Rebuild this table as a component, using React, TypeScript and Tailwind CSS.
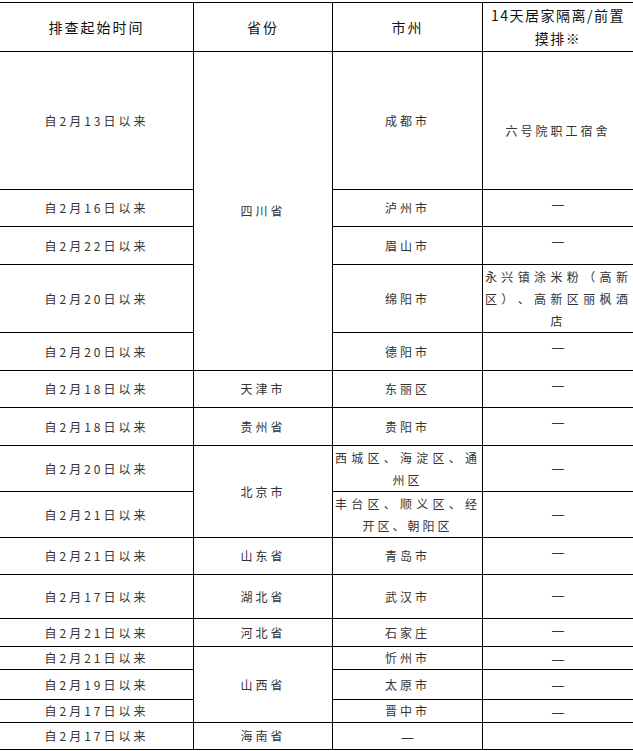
import React from "react";

type Row = {
  date: string;
  province?: string;
  provinceSpan?: string;
  city: string;
  cityWrap?: boolean;
  note?: string;
  noteClass?: string;
  noteWrap?: boolean;
};

const rows: Row[] = [
  { date: "自2月13日以来", province: "四川省", provinceSpan: "row-span-5", city: "成都市", note: "六号院职工宿舍", noteClass: "pt-[20px]" },
  { date: "自2月16日以来", city: "泸州市", note: "—", noteClass: "pb-[10px]" },
  { date: "自2月22日以来", city: "眉山市", note: "—", noteClass: "pb-[10px]" },
  { date: "自2月20日以来", city: "绵阳市", note: "永兴镇涂米粉（高新区）、高新区丽枫酒店", noteWrap: true },
  { date: "自2月20日以来", city: "德阳市", note: "—", noteClass: "pb-[10px]" },
  { date: "自2月18日以来", province: "天津市", city: "东丽区", note: "—", noteClass: "pb-[10px]" },
  { date: "自2月18日以来", province: "贵州省", city: "贵阳市", note: "—", noteClass: "pb-[10px]" },
  { date: "自2月20日以来", province: "北京市", provinceSpan: "row-span-2", city: "西城区、海淀区、通州区", cityWrap: true, note: "—", noteClass: "pb-[3px]" },
  { date: "自2月21日以来", city: "丰台区、顺义区、经开区、朝阳区", cityWrap: true, note: "—", noteClass: "pb-[3px]" },
  { date: "自2月21日以来", province: "山东省", city: "青岛市", note: "—", noteClass: "pb-[10px]" },
  { date: "自2月17日以来", province: "湖北省", city: "武汉市", note: "—", noteClass: "pb-[4px]" },
  { date: "自2月21日以来", province: "河北省", city: "石家庄", note: "—", noteClass: "pb-[6px]" },
  { date: "自2月21日以来", province: "山西省", provinceSpan: "row-span-3", city: "忻州市", note: "—" },
  { date: "自2月19日以来", city: "太原市", note: "—" },
  { date: "自2月17日以来", city: "晋中市", note: "—" },
  { date: "自2月17日以来", province: "海南省", city: "—", note: "" },
];

const cell = "flex items-center justify-center text-center border-b border-r border-black px-[2px]";
const body = "text-[12px] tracking-[3px] text-[#333]";

function Text({ value, wrap }: { value: string; wrap?: boolean }) {
  if (value === "—") {
    return <span className="text-[15px] leading-none tracking-normal text-[#333]">—</span>;
  }

  if (wrap) {
    return (
      <div className="w-full text-justify leading-[22px] [text-align-last:center]">
        {value}
      </div>
    );
  }

  return <span>{value}</span>;
}

export default function App() {
  return (
    <main
      className="min-h-screen bg-white [text-spacing-trim:space-all]"
      style={{ fontFamily: '"Noto Sans CJK SC", "Liberation Sans", sans-serif' }}
    >
      <div className="mt-[2px] grid w-[633px] grid-cols-[194px_139px_150px_150px] grid-rows-[49px_138px_37px_38px_68px_38px_37px_38px_46px_46px_37px_44px_28px_23px_30px_23px_27px] border-t border-black">
        <div className={`${cell} text-[14px] tracking-[2px] text-[#111]`}>排查起始时间</div>
        <div className={`${cell} text-[14px] tracking-[2px] text-[#111]`}>省份</div>
        <div className={`${cell} text-[14px] tracking-[2px] text-[#111]`}>市州</div>
        <div className={`${cell} border-r-0 text-[14px] leading-[23px] tracking-[1.5px] text-[#111]`}>
          14天居家隔离/前置摸排※
        </div>

        {rows.map((row, index) => (
          <React.Fragment key={index}>
            <div className={`${cell} ${body}`}>{row.date}</div>
            {row.province && (
              <div className={`${cell} ${body} ${row.provinceSpan ?? ""}`}>{row.province}</div>
            )}
            <div className={`${cell} ${body} ${row.cityWrap ? "leading-[21px]" : ""}`}>
              <Text value={row.city} wrap={row.cityWrap} />
            </div>
            <div className={`${cell} ${body} border-r-0 ${row.noteClass ?? ""}`}>
              <Text value={row.note ?? ""} wrap={row.noteWrap} />
            </div>
          </React.Fragment>
        ))}
      </div>
    </main>
  );
}
